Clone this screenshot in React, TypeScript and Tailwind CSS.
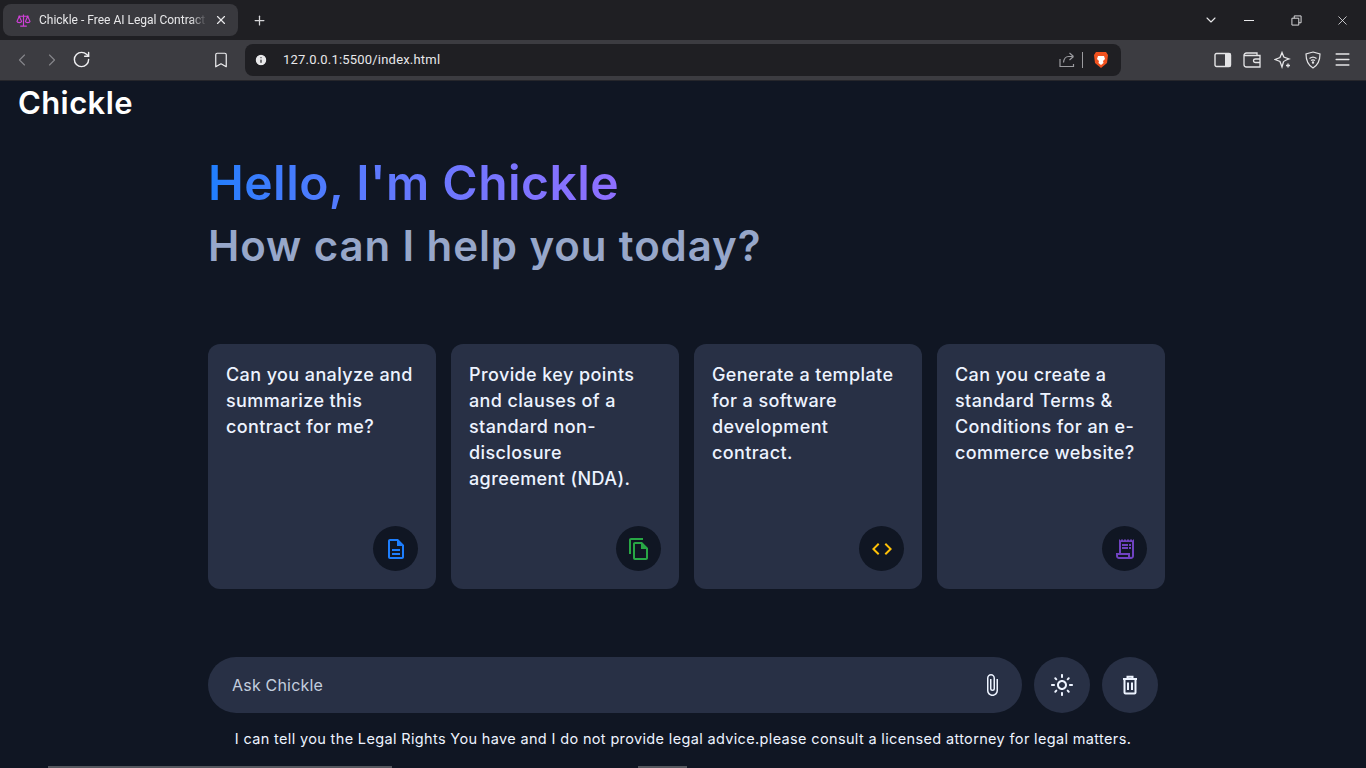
import { Plus, X, ChevronLeft, ChevronRight, RotateCw, Bookmark, Info, ChevronDown, Menu } from "lucide-react";
import {
  MdOutlineDescription,
  MdOutlineFileCopy,
  MdCode,
  MdOutlineReceiptLong,
  MdOutlineAttachFile,
  MdOutlineLightMode,
} from "react-icons/md";

const suggestions = [
  { text: "Can you analyze and summarize this contract for me?", icon: MdOutlineDescription, color: "text-[#1d7efd]" },
  { text: "Provide key points and clauses of a standard non-disclosure agreement (NDA).", icon: MdOutlineFileCopy, color: "text-[#28a745]" },
  { text: "Generate a template for a software development contract.", icon: MdCode, color: "text-[#ffc107]" },
  { text: "Can you create a standard Terms & Conditions for an e-commerce website?", icon: MdOutlineReceiptLong, color: "text-[#6f42c1]" },
];

function BrowserChrome() {
  return (
    <div className="font-['Roboto',sans-serif] text-[#e8e8ea]">
      {/* tab strip */}
      <div className="flex h-10 items-center bg-[#1f1f23] pl-[3px]">
        <div className="flex h-8 w-[235px] items-center rounded-lg bg-[#39393e] pl-[13px] pr-[10px]">
          <svg viewBox="0 0 16 16" className="h-[15px] w-[15px] shrink-0 text-[#d040d8]" fill="none" stroke="currentColor" strokeWidth="1.200">
            <path d="M8 1.500v12M4.500 14h7M2.500 3.500h11M3.500 3.500 1 9c.4 1.600 4.600 1.600 5 0L3.500 3.500ZM12.500 3.500 10 9c.4 1.600 4.600 1.600 5 0l-2.500-5.500Z" />
          </svg>
          <span className="ml-[8px] w-[168px] overflow-hidden whitespace-nowrap text-[12px] [mask-image:linear-gradient(to_right,black_90%,transparent)]">
            Chickle - Free AI Legal Contract
          </span>
          <X className="ml-auto h-[14px] w-[14px]" strokeWidth={2} />
        </div>
        <Plus className="ml-[14px] h-[15px] w-[15px] text-[#d5d5d8]" strokeWidth={2} />
        <div className="ml-auto flex items-center pr-[16px]">
          <ChevronDown className="mr-[25px] h-[16px] w-[16px]" strokeWidth={1.6} />
          <span className="mr-[37px] h-px w-[10px] bg-[#e8e8ea]" />
          <svg viewBox="0 0 12 12" className="mr-[33px] h-[11px] w-[11px]" fill="none" stroke="currentColor" strokeWidth="1">
            <path d="M1 3.500h7.500V11H1zM3.500 3.500V1H11v7.500H8.500" />
          </svg>
          <X className="h-[15px] w-[15px]" strokeWidth={1.3} />
        </div>
      </div>
      {/* toolbar */}
      <div className="flex h-[41px] items-center border-b border-b-[#26262b] bg-[#3c3c41] pb-px">
        <ChevronLeft className="ml-[12px] h-[20px] w-[20px] text-[#85858a]" strokeWidth={1.4} />
        <ChevronRight className="ml-[10px] h-[20px] w-[20px] text-[#85858a]" strokeWidth={1.4} />
        <RotateCw className="ml-[10px] h-[19px] w-[19px] text-[#f0f0f2]" strokeWidth={1.8} />
        <Bookmark className="ml-[121px] h-[18px] w-[18px] text-[#f0f0f2]" strokeWidth={1.6} />
        <div className="ml-[15px] flex h-8 w-[876px] items-center rounded-lg bg-[#1f1f23] pl-[9px] pr-[12px]">
          <Info className="h-[14px] w-[14px] fill-[#e8e8ea] text-[#1f1f23]" strokeWidth={2} />
          <span className="ml-[15px] text-[13px] tracking-[0.2px] text-[#e8e8ea]">127.0.0.1:5500/index.html</span>
          <svg viewBox="0 0 16 16" className="ml-auto h-[16px] w-[16px] text-[#9b9b9f]" fill="none" stroke="currentColor" strokeWidth="1.200">
            <path d="M1 7v7.500h13.500V12M14.500 4.500 10.500 1M14.500 4.500 10.500 8M14.500 4.500H9.500C6.500 4.500 5 6.500 4.500 10.500" />
          </svg>
          <span className="ml-[7px] h-4 w-px bg-[#9b9b9f]" />
          <svg viewBox="0 0 16 18" className="ml-[10px] h-[18px] w-[16px]">
            <path d="M3 1h10l2 3-1 8-6 5-6-5-1-8z" fill="#f1521f" />
            <path d="M5 5h6l1 3-2 2 .5 2L8 14l-2.500-2 .5-2-2-2z" fill="#fff" />
          </svg>
        </div>
        <div className="ml-auto flex items-center pr-[14px] text-[#e4e4e6]">
          <svg viewBox="0 0 18 16" className="h-[16px] w-[18px]">
            <rect x="1" y="1.500" width="15.500" height="13" rx="1.500" fill="none" stroke="currentColor" strokeWidth="1.400" />
            <rect x="11" y="1.500" width="5.500" height="13" fill="currentColor" />
          </svg>
          <svg viewBox="0 0 18 16" className="ml-[11px] h-[16px] w-[18px]" fill="none" stroke="currentColor" strokeWidth="1.300">
            <path d="M1 3.500C1 2 2 1 3.500 1H14v2.500M1 3.500v9C1 14 2 15 3.500 15H17V3.500H3C2 3.500 1 3.500 1 3.500Z" />
            <path d="M17 7h-4.500c-1.300 0-2 .8-2 1.800s.7 1.700 2 1.700H17" />
          </svg>
          <svg viewBox="0 0 18 18" className="ml-[13px] h-[18px] w-[18px]" fill="none" stroke="currentColor" strokeWidth="1.300">
            <path d="M8 1.500 9.800 6 15 8c-3 1-5 1.800-5.500 2.800L8 16 6 10.500 1 8.500 6 6.500z" />
            <path d="M14 12.500v4M12 14.500h4" />
          </svg>
          <svg viewBox="0 0 16 18" className="ml-[13px] h-[18px] w-[16px]" fill="none" stroke="currentColor" strokeWidth="1.200">
            <path d="M8 1 15 3c0 7-2 11-7 14C3 14 1 10 1 3z" />
            <path d="M4.500 7.500c2-1.700 5-1.700 7 0M6 9.500c1.200-.8 2.800-.8 4 0" />
            <circle cx="8" cy="11.500" r=".6" fill="currentColor" />
          </svg>
          <Menu className="ml-[12px] h-[19px] w-[19px]" strokeWidth={1.8} />
        </div>
      </div>
    </div>
  );
}

export default function App() {
  return (
    <div className="relative flex h-[768px] flex-col overflow-hidden bg-[#101623] font-['Inter',sans-serif] text-[#edf3ff]">
      <BrowserChrome />

      <header className="pl-[18px] pt-[4px] text-[31px] font-semibold leading-[36px] tracking-[0.4px] text-white">Chickle</header>

      <main className="ml-[208px] w-[957px]">
        <h1 className="mt-[26px] w-fit bg-gradient-to-r from-[#1d7efd] to-[#8f6fff] bg-clip-text text-[48px] font-semibold leading-[72px] tracking-[0.47px] text-transparent">
          Hello, I'm Chickle
        </h1>
        <h2 className="mt-[-5px] text-[42px] font-semibold leading-[63px] tracking-[0.9px] text-[#97a7ca]">How can I help you today?</h2>

        <ul className="mt-[67px] grid grid-cols-4 gap-[15px]">
          {suggestions.map((s) => {
            const Icon = s.icon;
            return (
              <li key={s.text} className="relative h-[245px] rounded-xl bg-[#283045] p-[18px] text-[18px] font-[450] leading-[26px] tracking-[0.4px] text-[#edf3ff]">
                <p className="-translate-y-[0.5px]">{s.text}</p>
                <span className="absolute bottom-[18px] right-[18px] flex h-[45px] w-[45px] items-center justify-center rounded-full bg-[#101623]">
                  <Icon className={`h-[24px] w-[24px] ${s.color}`} />
                </span>
              </li>
            );
          })}
        </ul>

        <div className="mt-[68px] flex items-center gap-[12px]">
          <div className="flex h-[56px] w-[814px] items-center rounded-full bg-[#283045] pl-[24px] pr-[18px]">
            <span className="text-[16px] tracking-[0.2px] text-[#c3cdde]">Ask Chickle</span>
            <MdOutlineAttachFile className="ml-auto h-[24px] w-[24px] text-[#edf3ff]" />
          </div>
          <span className="flex h-[56px] w-[56px] items-center justify-center rounded-full bg-[#283045]">
            <MdOutlineLightMode className="h-[24px] w-[24px]" />
          </span>
          <span className="flex h-[56px] w-[56px] items-center justify-center rounded-full bg-[#283045]">
            <svg viewBox="0 0 24 24" className="h-[24px] w-[24px]" fill="none" stroke="currentColor" strokeWidth="2">
              <path d="M5 6h14M9.500 5V3.800h5V5M6.500 6v13.500c0 .6.400 1 1 1h9c.6 0 1-.4 1-1V6M10 9.500v7.500M14 9.500v7.500" />
            </svg>
          </span>
        </div>
      </main>

      <p className="mt-[15px] text-center text-[14.500px] leading-[22px] tracking-[0.35px] text-[#edf3ff]">
        I can tell you the Legal Rights You have and I do not provide legal advice.please consult a licensed attorney for legal matters.
      </p>

      {/* sliver of a window peeking in at the bottom edge */}
      <div className="absolute bottom-0 left-[48px] h-[2px] w-[344px] bg-[#55585f]" />
      <div className="absolute bottom-0 left-[638px] h-[2px] w-[49px] bg-[#55585f]" />
    </div>
  );
}
